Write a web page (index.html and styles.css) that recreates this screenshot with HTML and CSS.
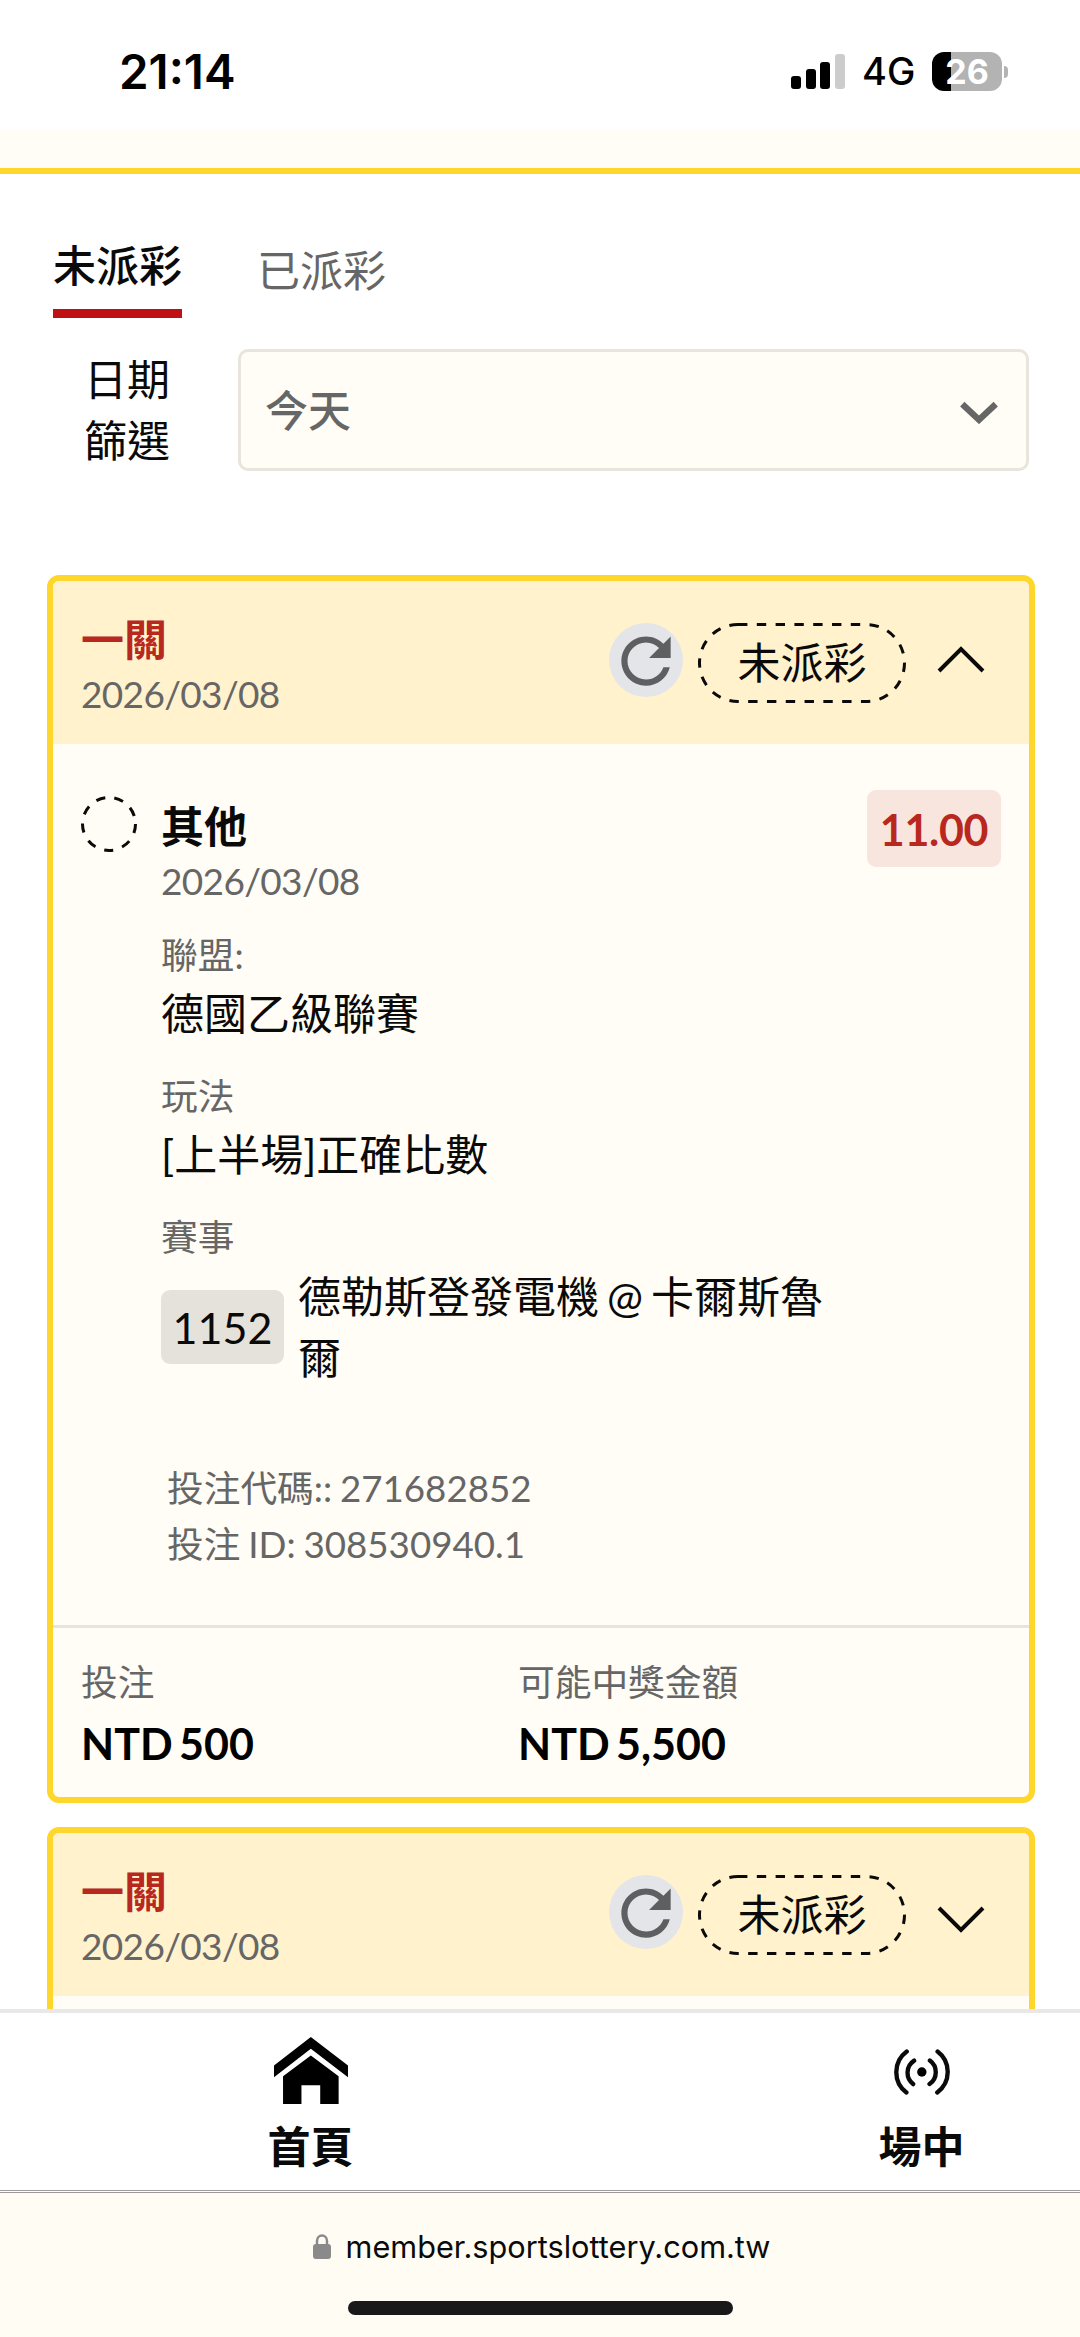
FILE: index.html
```html
<!DOCTYPE html>
<html lang="zh-Hant">
<head>
<meta charset="utf-8">
<title>投注紀錄</title>
<link rel="stylesheet" href="styles.css">
</head>
<body>
<div class="phone">

<header class="status-bar">
<span class="time">21:14</span>
<div class="status-icons">
<svg class="signal" viewBox="0 0 54 36">
<rect x="0" y="22" width="10" height="13" rx="3"/>
<rect x="15" y="15" width="10" height="20" rx="3"/>
<rect x="29" y="8" width="10" height="27" rx="3"/>
<rect class="off" x="44" y="0" width="10" height="35" rx="3"/>
</svg>
<span class="network">4G</span>
<span class="battery">26</span>
<span class="battery-tip"></span>
</div>
</header>

<div class="top-strip"></div>

<main class="content">
<nav class="tabs">
<a class="tab active">未派彩</a>
<a class="tab">已派彩</a>
</nav>

<div class="filter">
<label class="filter-label">日期<br>篩選</label>
<div class="select">
<span>今天</span>
<svg class="select-arrow" viewBox="0 0 36 22"><path d="M2 3l16 15L34 3"/></svg>
</div>
</div>

<section class="ticket">
<div class="ticket-header">
<div class="ticket-title">
<h2>一關</h2>
<span class="date">2026/03/08</span>
</div>
<button class="refresh"><svg viewBox="0 -0.35 24 24"><path d="M17.65 6.35C16.2 4.9 14.21 4 12 4c-4.42 0-7.99 3.58-7.99 8s3.57 8 7.99 8c3.73 0 6.84-2.55 7.73-6h-2.08c-.82 2.33-3.04 4-5.65 4-3.31 0-6-2.69-6-6s2.69-6 6-6c1.66 0 3.14.69 4.22 1.78L13 11h7V4l-2.35 2.35z"/></svg></button>
<div class="pill">
<svg class="pill-border" viewBox="0 0 208 80"><rect x="1.5" y="1.5" width="205" height="77" rx="38.5"/></svg>
<span>未派彩</span>
</div>
<svg class="toggle" viewBox="0 0 48 27"><path d="M2 25L24 3l22 22"/></svg>
</div>

<div class="ticket-body">
<svg class="pending" viewBox="0 0 56 56"><circle cx="28" cy="28" r="26.5"/></svg>
<div class="bet">
<h3>其他</h3>
<span class="date">2026/03/08</span>
<dl class="details">
<dt>聯盟:</dt>
<dd>德國乙級聯賽</dd>
<dt>玩法</dt>
<dd>[上半場]正確比數</dd>
<dt>賽事</dt>
<dd class="match">
<span class="match-no">1152</span>
<span class="match-name">德勒斯登發電機 @ 卡爾斯魯爾</span>
</dd>
</dl>
<div class="codes">
<p>投注代碼:: 271682852</p>
<p>投注 ID: 308530940.1</p>
</div>
</div>
<span class="odds">11.00</span>
</div>

<div class="ticket-footer">
<div class="amount">
<span class="amount-label">投注</span>
<strong>NTD 500</strong>
</div>
<div class="amount">
<span class="amount-label">可能中獎金額</span>
<strong>NTD 5,500</strong>
</div>
</div>
</section>

<section class="ticket">
<div class="ticket-header">
<div class="ticket-title">
<h2>一關</h2>
<span class="date">2026/03/08</span>
</div>
<button class="refresh"><svg viewBox="0 -0.35 24 24"><path d="M17.65 6.35C16.2 4.9 14.21 4 12 4c-4.42 0-7.99 3.58-7.99 8s3.57 8 7.99 8c3.73 0 6.84-2.55 7.73-6h-2.08c-.82 2.33-3.04 4-5.65 4-3.31 0-6-2.69-6-6s2.69-6 6-6c1.66 0 3.14.69 4.22 1.78L13 11h7V4l-2.35 2.35z"/></svg></button>
<div class="pill">
<svg class="pill-border" viewBox="0 0 208 80"><rect x="1.5" y="1.5" width="205" height="77" rx="38.5"/></svg>
<span>未派彩</span>
</div>
<svg class="toggle closed" viewBox="0 0 48 27"><path d="M2 2l22 22L46 2"/></svg>
</div>
<div class="ticket-rest"></div>
</section>
</main>

<nav class="bottom-nav">
<a class="nav-item">
<svg class="home-icon" viewBox="0 0 221 200">
<path d="M110 0l111 85v35L110 35 0 120V85z"/>
<path d="M110 55l83 62v83h-55v-56H82v56H27v-83z"/>
</svg>
<span>首頁</span>
</a>
<a class="nav-item">
<svg class="live-icon" viewBox="0 0 167 136">
<circle cx="83" cy="68" r="14"/>
<path d="M38 7A76 76 0 0 0 37 129M60 34A43 43 0 0 0 57 104M130 7A76 76 0 0 1 129 129M107 34A43 43 0 0 1 106 104"/>
</svg>
<span>場中</span>
</a>
</nav>

<footer class="browser-bar">
<div class="address">
<svg class="lock" viewBox="0 0 18 25"><rect x="0" y="10" width="18" height="15" rx="3"/><path d="M4 11V7a5 5.500 0 0 1 10 0v4"/></svg>
<span>member.sportslottery.com.tw</span>
</div>
<div class="home-indicator"></div>
</footer>

</div>
</body>
</html>
```

FILE: styles.css
```css
* {
	box-sizing: border-box;
}

body {
	margin: 0;
	background: #fff;
	color: #0a0a0a;
	font-family: Lato, "Noto Sans CJK TC", sans-serif;
	font-size: 43px;
	line-height: 61px;
	word-spacing: -3px;
}

h2, h3, p, dl, dd {
	margin: 0;
}

.phone {
	display: flex;
	flex-direction: column;
	width: 1080px;
	height: 2337px;
	overflow: hidden;
}

/* status bar */

.status-bar {
	display: flex;
	flex: none;
	justify-content: space-between;
	height: 130px;
	padding: 41px 72px 0 119px;
	font-family: Inter, sans-serif;
	color: #000;
}

.time {
	font-size: 47.5px;
	font-weight: 600;
}

.status-icons {
	display: flex;
	align-items: center;
	height: 61px;
}

.signal {
	width: 54px;
	height: 36px;
	margin-right: 17px;
}

.signal .off {
	fill: #ccc;
}

.network {
	width: 70px;
	font-size: 38px;
	font-weight: 500;
}

.battery {
	width: 70px;
	height: 39px;
	border-radius: 12px;
	background: linear-gradient(to right, #000 19px, #b3b3b3 19px);
	color: #fff;
	font-size: 34px;
	font-weight: 700;
	line-height: 40px;
	text-align: center;
}

.battery-tip {
	width: 4px;
	height: 12px;
	margin-left: 2px;
	border-radius: 0 6px 6px 0;
	background: #b3b3b3;
}

.top-strip {
	flex: none;
	height: 38px;
	background: #fffdf5;
}

/* page */

.content {
	flex: 1;
	min-height: 0;
	overflow: hidden;
	padding: 0 45px 0 47px;
	border-top: 6px solid #ffd62b;
}

.tabs {
	display: flex;
	gap: 75px;
	height: 145px;
	padding: 60px 0 0 6px;
}

.tab {
	height: 84px;
	padding-top: 6px;
	color: #666;
}

.tab.active {
	padding-top: 1px;
	border-bottom: 9px solid #bf1013;
	color: #0a0a0a;
	font-weight: 500;
}

.filter {
	display: flex;
	gap: 68px;
	margin: 30px 6px 0 37px;
}

.filter-label {
	width: 86px;
	text-align: right;
}

.select {
	display: flex;
	align-items: center;
	justify-content: space-between;
	flex: 1;
	height: 122px;
	padding: 0 28px 0 24px;
	border: 3px solid #e9e5dd;
	border-radius: 10px;
	background: #fffdf5;
	color: #666;
	font-weight: 500;
}

.select-arrow {
	width: 38px;
	height: 23px;
	margin-top: 4px;
	fill: none;
	stroke: #666;
	stroke-width: 6;
}

/* tickets */

.ticket {
	margin-bottom: 24px;
	border: 6px solid #ffd62b;
	border-radius: 12px;
	background: #fffdf5;
	overflow: hidden;
}

.filter + .ticket {
	margin-top: 104px;
}

.ticket-header {
	display: flex;
	height: 163px;
	padding: 28px 44px 0 28px;
	background: #fff2cc;
}

.ticket-title {
	flex: 1;
}

.ticket-title h2 {
	color: #b8281e;
	font-size: 43px;
	font-weight: 700;
	line-height: 61px;
}

.date {
	display: block;
	color: #666;
	font-size: 37px;
	letter-spacing: -0.65px;
	line-height: 47px;
}

.refresh {
	width: 74px;
	height: 74px;
	margin: 14px 15px 0 0;
	padding: 0;
	border: 0;
	border-radius: 50%;
	background: #e4e5e8;
}

.refresh svg {
	display: block;
	fill: #5e5f61;
}

.pill {
	position: relative;
	width: 208px;
	height: 80px;
	margin: 14px 31px 0 0;
	line-height: 80px;
	text-align: center;
}

.pill-border {
	position: absolute;
	inset: 0;
	fill: none;
	stroke: #0a0a0a;
	stroke-width: 3;
	stroke-dasharray: 9.4 9.4;
}

.toggle {
	width: 48px;
	height: 27px;
	margin-top: 37px;
	fill: none;
	stroke: #0a0a0a;
	stroke-width: 4;
}

.toggle.closed {
	margin-top: 45px;
}

.ticket-body {
	display: flex;
	align-items: flex-start;
	height: 884px;
	padding: 46px 28px 0;
	border-bottom: 3px solid #e7e4de;
}

.pending {
	width: 56px;
	height: 56px;
	margin-top: 6px;
	fill: none;
	stroke: #0a0a0a;
	stroke-width: 3;
	stroke-dasharray: 9.25 9.25;
}

.bet {
	flex: 1;
	padding: 6px 0 0 24px;
}

.bet h3 {
	font-size: 43px;
	font-weight: 700;
}

.details {
	margin-top: 24px;
}

.details dt {
	color: #666;
	font-size: 36.7px;
	line-height: 55px;
}

.details dd {
	margin-bottom: 25px;
}

.details .match {
	display: flex;
	align-items: center;
	gap: 14px;
	padding-top: 1px;
}

.match-no {
	width: 123px;
	height: 74px;
	border-radius: 9px;
	background: #e5e2dc;
	line-height: 75px;
	text-align: center;
}

.match-name {
	width: 545px;
}

.codes {
	margin-top: 73px;
	padding-left: 6px;
	color: #666;
	font-size: 36.7px;
	line-height: 55.5px;
	word-spacing: -1.5px;
}

.odds {
	width: 134px;
	height: 77px;
	border-radius: 9px;
	background: #f8e5de;
	color: #b8281e;
	font-weight: 700;
	letter-spacing: -0.3px;
	line-height: 79px;
	text-align: center;
}

.ticket-footer {
	display: flex;
	height: 169px;
	padding: 27px 28px 0;
}

.amount {
	display: flex;
	flex-direction: column;
	width: 437px;
}

.amount-label {
	color: #666;
	font-size: 36.7px;
	line-height: 55px;
}

.amount strong {
	margin-top: 3px;
	color: #000;
	word-spacing: -4px;
}

.ticket-rest {
	height: 200px;
}

/* bottom nav */

.bottom-nav {
	display: flex;
	flex: none;
	height: 184px;
	padding-left: 5px;
	overflow: hidden;
	border-top: 4px solid #e8e8e8;
	border-bottom: 3px double #9b9b9b;
	background: #fff;
}

.nav-item {
	display: flex;
	flex: 0 0 611px;
	flex-direction: column;
	align-items: center;
	padding-top: 24px;
	font-weight: 700;
}

.nav-item span {
	margin-top: auto;
	margin-bottom: 13px;
}

.home-icon {
	width: 74px;
	height: 67px;
}

.live-icon {
	width: 56px;
	height: 46px;
	margin-top: 12px;
}

.live-icon path {
	fill: none;
	stroke: #0a0a0a;
	stroke-width: 13;
	stroke-linecap: round;
}

/* browser */

.browser-bar {
	display: flex;
	flex: none;
	flex-direction: column;
	align-items: center;
	height: 144px;
	padding-top: 23px;
	background: #fffcf4;
}

.address {
	display: flex;
	align-items: center;
	gap: 15px;
	padding-left: 3px;
	color: #0a0a0a;
	font-family: Inter, sans-serif;
	font-size: 30.7px;
}

.lock {
	width: 18px;
	height: 25px;
	fill: #8a8a8a;
}

.lock path {
	fill: none;
	stroke: #8a8a8a;
	stroke-width: 2.5;
}

.home-indicator {
	width: 385px;
	height: 14px;
	margin-top: 24px;
	border-radius: 7px;
	background: #191919;
}
```
